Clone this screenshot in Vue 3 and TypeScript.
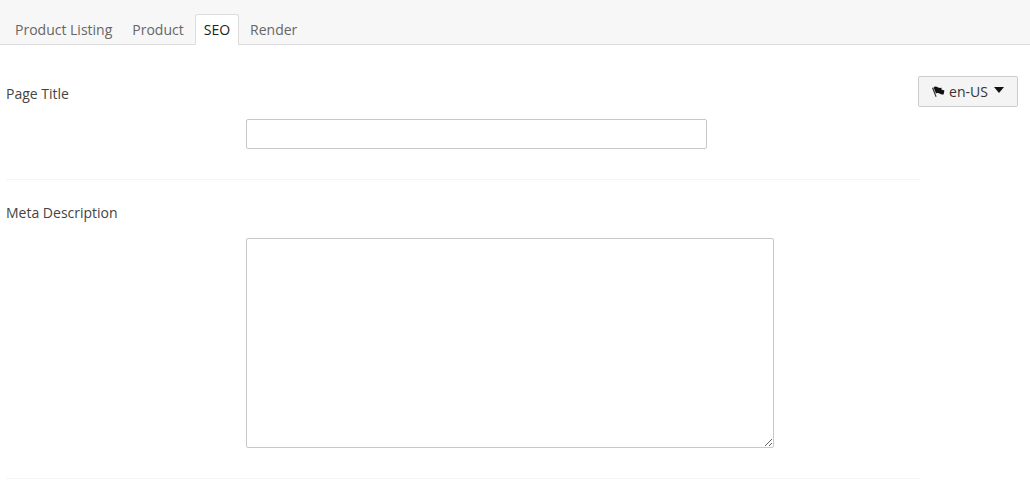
<script setup lang="ts">
const tabs: string[] = ['Product Listing', 'Product', 'SEO', 'Render']
const activeTab = 'SEO'
</script>

<template>
  <div class="page">
    <nav class="tabs">
      <a v-for="t in tabs" :key="t" class="tab" :class="{ active: t === activeTab }">{{ t }}</a>
    </nav>
    <div class="content">
      <form class="form">
        <section class="row first">
          <label class="label">Page Title</label>
          <div class="field"><input class="input" type="text" /></div>
        </section>
        <section class="row second">
          <label class="label">Meta Description</label>
          <div class="field"><textarea class="area"></textarea></div>
        </section>
      </form>
      <button class="lang" type="button">
        <svg class="flag" width="13" height="13" viewBox="0 0 13 13">
          <path d="M0 2 L1.2 1.5 L4.6 10.6 L3.6 11 Z" fill="#333" />
          <path d="M1.6 1.4 C3 0 4.4 .4 5.6 1.2 C7 2 8.2 2 9.6 1.8 L9.4 3.4 L12.4 4.4 L11.6 8.4 C10 8.8 8.8 8.4 7.6 7.6 C6.6 7 5.4 6.8 4 7.6 Z" fill="#111" />
        </svg>
        <span>en-US</span>
        <span class="caret"></span>
      </button>
    </div>
  </div>
</template>

<style>
html, body { margin: 0; background: #fff; }
</style>

<style scoped>
.page {
  font-family: "Open Sans", "Liberation Sans", sans-serif;
  font-size: 14px;
  color: #444;
  height: 483px;
  overflow: hidden;
}
.tabs {
  display: flex;
  align-items: flex-end;
  height: 44px;
  padding-left: 5px;
  background: #f7f7f7;
  border-bottom: 1px solid #ddd;
}
.tab {
  box-sizing: border-box;
  height: 31px;
  margin-bottom: -1px;
  padding: 4px 9px 0;
  line-height: 21px;
  color: #666;
  border: 1px solid transparent;
  border-bottom: 0;
  border-radius: 3px 3px 0 0;
}
.tab.active {
  color: #222;
  background: #fff;
  border-color: #ddd;
  padding: 4px 8px 0;
  margin: 0 1px -1px;
}
.content {
  display: flex;
  align-items: flex-start;
  padding: 31px 12px 0 6px;
}
.form {
  width: 912px;
  flex: none;
}
.row {
  margin-right: -2px;
  border-bottom: 1px solid #f5f5f5;
}
.first { padding-top: 8px; height: 95px; }
.second { padding-top: 23px; height: 275px; }
.label {
  display: block;
  line-height: 20px;
  height: 20px;
  color: #444;
}
.field {
  margin: 15px 0 0 240px;
}
.input {
  display: block;
  box-sizing: border-box;
  width: 461px;
  height: 30px;
  border: 1px solid #c8c8c8;
  border-radius: 2px;
  background: #fff;
  padding: 0 8px;
  outline: none;
}
.area {
  display: block;
  box-sizing: border-box;
  width: 528px;
  height: 210px;
  border: 1px solid #c8c8c8;
  border-radius: 2px;
  background: #fff;
  padding: 8px;
  outline: none;
  resize: both;
}
.lang {
  box-sizing: border-box;
  display: flex;
  align-items: center;
  justify-content: center;
  flex: none;
  width: 100px;
  height: 31px;
  padding: 0;
  font: inherit;
  color: #333;
  background: #f4f4f4;
  border: 1px solid #ccc;
  border-radius: 2px;
}
.flag { margin-right: 4px; margin-top: 2px; }
.caret {
  width: 0;
  height: 0;
  margin-left: 6px;
  margin-bottom: 3px;
  border-left: 5px solid transparent;
  border-right: 5px solid transparent;
  border-top: 6px solid #111;
}
</style>
